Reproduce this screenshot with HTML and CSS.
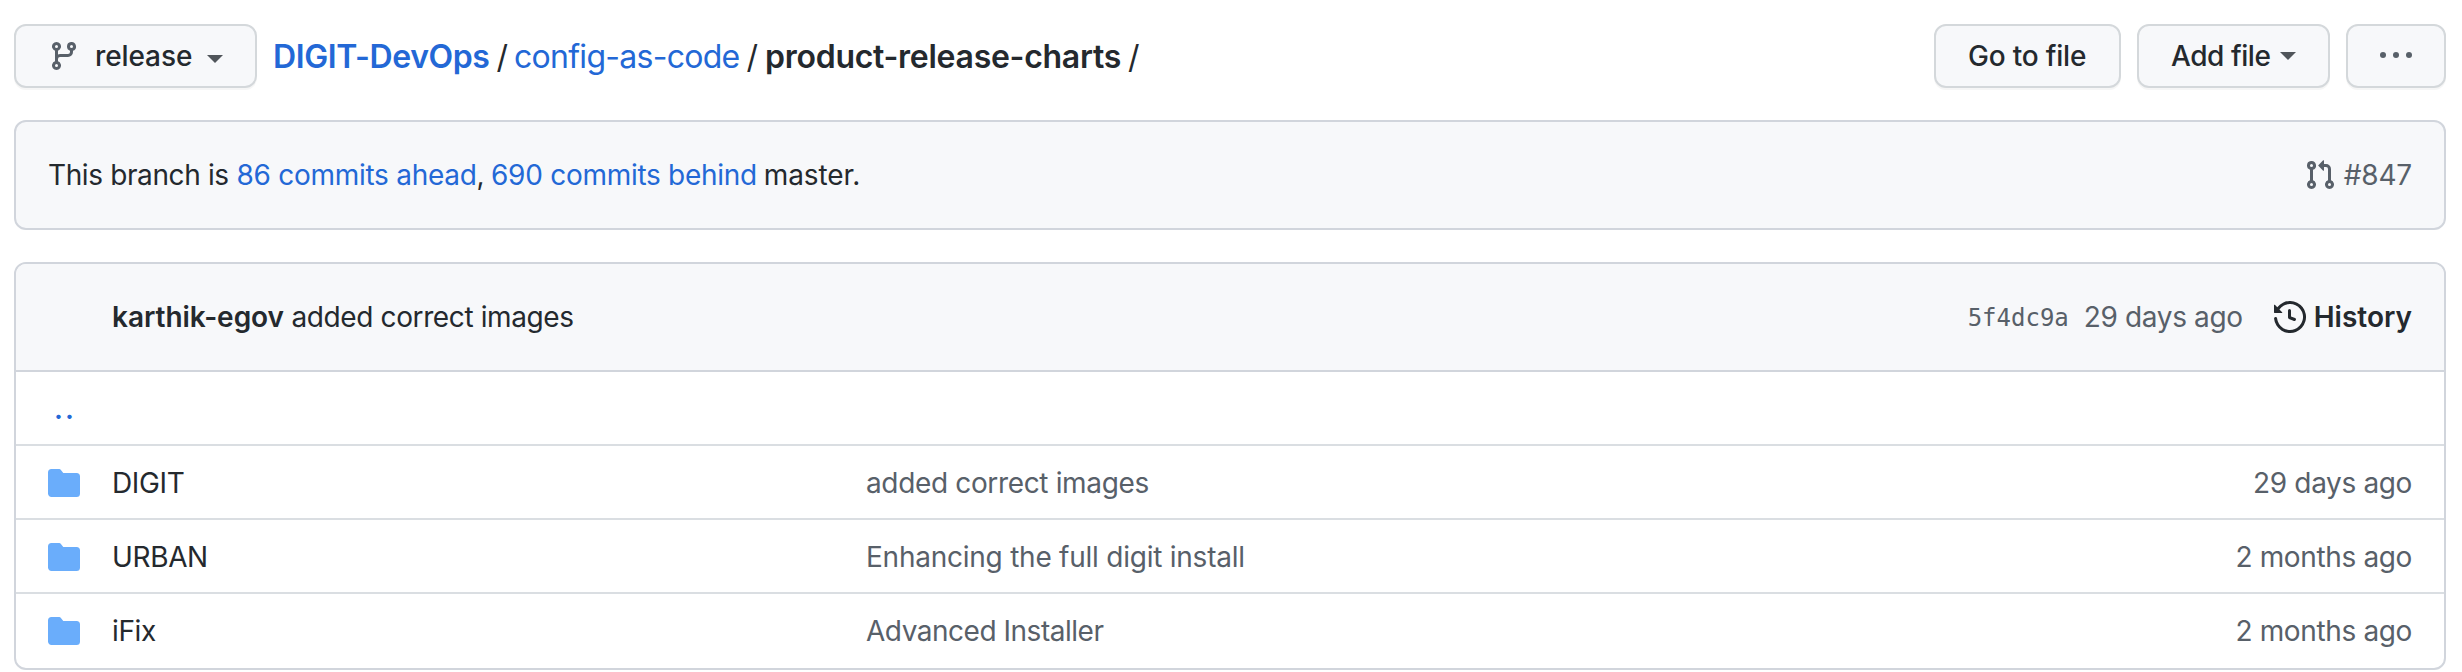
FILE: index.html
```
<!DOCTYPE html>
<html lang="en">
<head>
<meta charset="utf-8">
<title>DIGIT-DevOps/config-as-code/product-release-charts</title>
<link rel="stylesheet" href="styles.css">
</head>
<body>
<svg class="sprite" aria-hidden="true">
  <symbol id="folder" viewBox="0 0 16 16"><path d="M1.75 1A1.75 1.75 0 000 2.75v10.5C0 14.216.784 15 1.75 15h12.5A1.75 1.75 0 0016 13.25v-8.5A1.75 1.75 0 0014.25 3h-6.5a.25.25 0 01-.2-.1l-.9-1.2c-.33-.44-.85-.7-1.4-.7h-3.5z"/></symbol>
</svg>
<main class="page">
  <header class="toolbar">
    <button class="btn branch-btn">
      <svg class="icon" viewBox="0 0 16 16"><path fill-rule="evenodd" d="M11.75 2.5a.75.75 0 100 1.5.75.75 0 000-1.5zm-2.25.75a2.25 2.25 0 113 2.122V6A2.5 2.5 0 0110 8.5H6a1 1 0 00-1 1v1.128a2.251 2.251 0 11-1.5 0V5.372a2.25 2.25 0 111.5 0v1.836A2.492 2.492 0 016 7h4a1 1 0 001-1v-.628A2.25 2.25 0 019.5 3.25zM4.25 12a.75.75 0 100 1.5.75.75 0 000-1.5zM3.5 3.25a.75.75 0 111.5 0 .75.75 0 01-1.5 0z"/></svg>
      <span class="branch-name">release</span>
      <span class="caret branch-caret"></span>
    </button>
    <nav class="crumbs">
      <a class="crumb-root">DIGIT-DevOps</a><span class="slash">/</span><a class="crumb-dir">config-as-code</a><span class="slash">/</span><strong class="crumb-current">product-release-charts</strong><span class="slash">/</span>
    </nav>
    <div class="actions">
      <button class="btn goto-btn">Go to file</button>
      <button class="btn add-btn">Add file<span class="caret add-caret"></span></button>
      <button class="btn more-btn"><svg class="icon" viewBox="0 0 16 16"><circle cx="1.5" cy="7.5" r="1.5"/><circle cx="8" cy="7.5" r="1.5"/><circle cx="14.5" cy="7.5" r="1.5"/></svg></button>
    </div>
  </header>

  <section class="box branch-info">
    <p class="compare"><span class="lead">This branch is</span> <a class="ahead">86 commits ahead</a><span class="comma">,</span> <a class="behind">690 commits behind</a> <span class="base">master.</span></p>
    <a class="pull">
      <svg class="icon" viewBox="0 0 16 16"><path fill-rule="evenodd" d="M7.177 3.073L9.573.677A.25.25 0 0110 .854v4.792a.25.25 0 01-.427.177L7.177 3.427a.25.25 0 010-.354zM3.75 2.5a.75.75 0 100 1.5.75.75 0 000-1.5zm-2.25.75a2.25 2.25 0 113 2.122v5.256a2.251 2.251 0 11-1.5 0V5.372A2.25 2.25 0 011.5 3.25zM11 2.5h-1V4h1a1 1 0 011 1v5.628a2.251 2.251 0 101.5 0V5A2.5 2.5 0 0011 2.5zm1 10.25a.75.75 0 111.5 0 .75.75 0 01-1.5 0zM3.75 12a.75.75 0 100 1.5.75.75 0 000-1.5z"/></svg>
      <span>#847</span>
    </a>
  </section>

  <section class="box files">
    <div class="commit">
      <p class="message"><strong class="author">karthik-egov</strong> added correct images</p>
      <span class="sha">5f4dc9a</span>
      <span class="commit-age">29 days ago</span>
      <a class="history">
        <svg class="icon" viewBox="0 0 16 16"><path fill-rule="evenodd" d="M1.643 3.143L.427 1.927A.25.25 0 000 2.104V5.75c0 .138.112.25.25.25h3.646a.25.25 0 00.177-.427L2.715 4.215a6.5 6.5 0 11-1.18 4.458.75.75 0 10-1.493.154 8.001 8.001 0 101.6-5.684zM7.75 4a.75.75 0 01.75.75v2.992l2.028.812a.75.75 0 01-.557 1.392l-2.5-1A.75.75 0 017 8.25v-3.5A.75.75 0 017.75 4z"/></svg>
        <span>History</span>
      </a>
    </div>
    <div class="row parent-row"><a class="parent">..</a></div>
    <div class="row">
      <svg class="icon folder"><use href="#folder"/></svg>
      <a class="name">DIGIT</a><a class="note note-added">added correct images</a><span class="age">29 days ago</span>
    </div>
    <div class="row">
      <svg class="icon folder"><use href="#folder"/></svg>
      <a class="name">URBAN</a><a class="note">Enhancing the full digit install</a><span class="age">2 months ago</span>
    </div>
    <div class="row">
      <svg class="icon folder"><use href="#folder"/></svg>
      <a class="name">iFix</a><a class="note note-advanced">Advanced Installer</a><span class="age">2 months ago</span>
    </div>
  </section>
</main>
</body>
</html>
```
FILE: styles.css
```
* { box-sizing: border-box; }

body {
  margin: 0;
  background: #fff;
  color: #24292e;
  font: 400 28px/42px Inter, "Liberation Sans", sans-serif;
}

p { margin: 0; }
.sprite { display: none; }
.icon { display: block; flex: none; width: 32px; height: 32px; fill: #586069; }

.page {
  display: flex;
  flex-direction: column;
  gap: 32px;
  padding: 24px 16px 0 14px;
}

/* Toolbar */
.toolbar { display: flex; align-items: center; height: 64px; }

.btn {
  display: flex;
  align-items: center;
  height: 64px;
  margin: 0;
  padding: 0 0 0 32px;
  border: 2px solid #d4d8db;
  border-radius: 12px;
  background: #f7f8fa;
  box-shadow: 0 2px 0 rgba(27, 31, 35, .04);
  color: #24292e;
  font: 500 28px/40px Inter, "Liberation Sans", sans-serif;
  white-space: nowrap;
}

.branch-btn { width: 243px; }
.branch-name { margin-left: 15px; letter-spacing: -.1px; }
.caret {
  width: 16px;
  border: 8px solid transparent;
  border-top-color: #50555a;
  border-bottom: 0;
}
.branch-caret { margin: 5px 0 0 15px; }
.add-caret { margin-left: 10px; }

.crumbs {
  display: flex;
  flex: 1;
  margin-left: 16px;
  padding-top: 1px;
  font-size: 32px;
  line-height: 48px;
}
.crumb-root, .crumb-dir { color: #2368d6; }
.crumb-root { font-weight: 600; letter-spacing: -.4px; }
.crumb-dir { letter-spacing: -.72px; }
.crumb-current { margin-left: 1px; font-weight: 600; letter-spacing: -.28px; }
.slash { margin: 0 6px 0 7px; }

.actions { display: flex; gap: 16px; }
.goto-btn { width: 187px; letter-spacing: -.2px; }
.add-btn { width: 193px; letter-spacing: -.45px; }
.more-btn { width: 100px; }

/* Boxes */
.box { border: 2px solid #d1d5dc; border-radius: 12px; }

.branch-info {
  display: flex;
  align-items: center;
  justify-content: space-between;
  height: 110px;
  padding: 0 32px;
  background: #f7f8fa;
}
.lead { letter-spacing: -.38px; }
.ahead, .behind { color: #2368d6; letter-spacing: -.28px; }
.comma { letter-spacing: -1.5px; }
.base { margin-left: -1px; letter-spacing: -.1px; }
.pull { display: flex; align-items: center; gap: 8px; color: #586069; letter-spacing: -.2px; }

.files { height: 408px; overflow: hidden; }
.commit {
  display: flex;
  align-items: center;
  height: 108px;
  padding: 0 32px 0 96px;
  border-bottom: 2px solid #d1d5dc;
  background: #f7f8fa;
}
.message { flex: 1; letter-spacing: -.38px; }
.author { font-weight: 600; letter-spacing: -.05px; }
.sha { padding-top: 2px; color: #586069; font: 24px/42px "DejaVu Sans Mono", monospace; }
.commit-age { margin-left: 15px; color: #586069; letter-spacing: -.36px; }
.history { display: flex; align-items: center; gap: 8px; margin-left: 31px; font-weight: 600; }
.history .icon { fill: #24292e; }

/* File rows */
.row {
  display: grid;
  grid-template-columns: 64px 754px 1fr auto;
  height: 74px;
  padding: 16px 32px 0;
  border-bottom: 2px solid #dadee2;
}
.row:last-child { border-bottom: 0; }
.folder { margin-top: 5px; fill: #6aadfb; }
.name { letter-spacing: -.35px; }
.note, .age { color: #586069; letter-spacing: -.24px; }
.note-added { letter-spacing: -.35px; }
.note-advanced { letter-spacing: -.48px; }
.age { letter-spacing: -.36px; }
.parent { padding-left: 6px; color: #2368d6; font-weight: 600; letter-spacing: 2px; }
```
